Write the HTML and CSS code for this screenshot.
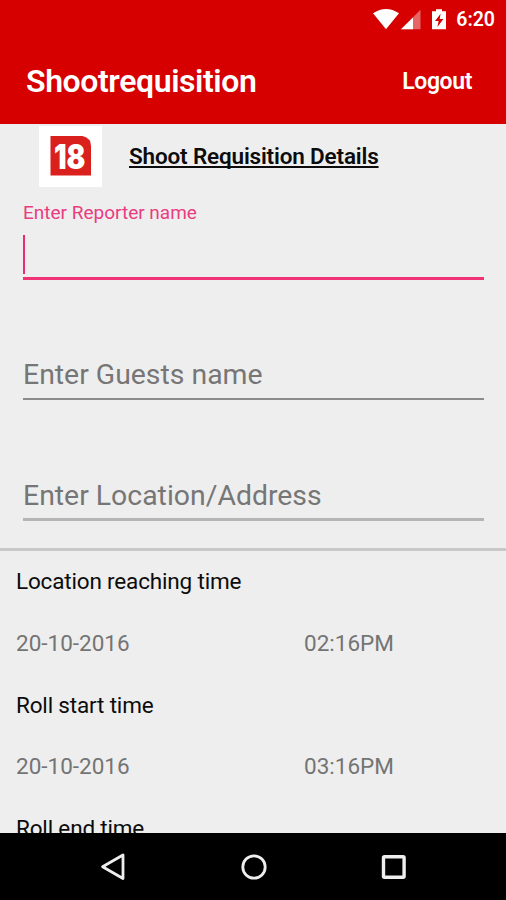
FILE: index.html
```html
<!DOCTYPE html>
<html lang="en">
<head>
<meta charset="utf-8">
<title>Shootrequisition</title>
<link rel="stylesheet" href="styles.css">
</head>
<body>
<div class="screen">
  <header class="top">
    <div class="status">
      <svg class="status-icons" width="80" height="24" viewBox="0 0 80 24">
        <path d="M0 4.3Q13 -4.3 26 4.3L13 20.3Z" fill="#fff"/>
        <path d="M47.5 0.8V20.3H28Z" fill="#fff" opacity=".4"/>
        <path d="M40 8.4V20.3H28Z" fill="#fff"/>
        <path d="M63 .2h6v2h4v18H59v-18h4Z" fill="#fff"/>
        <path d="M67.6 4.8L62 12h3.6l-1.2 6 6-8h-3.7Z" fill="#d60000"/>
      </svg>
      <span class="clock">6:20</span>
    </div>
    <div class="appbar">
      <h1 class="title">Shootrequisition</h1>
      <span class="logout">Logout</span>
    </div>
  </header>
  <main class="content">
    <div class="heading">
      <svg class="logo" width="63" height="61" viewBox="0 0 63 61">
        <path d="M0 0H63V61H0Z" fill="#fff"/>
        <path d="M11.5 10H43.5Q52 12 52 20V49.5H11.5Z" fill="#d9201c"/>
        <text class="logo-text" x="15" y="42.8" textLength="31.5" lengthAdjust="spacingAndGlyphs">18</text>
      </svg>
      <h2 class="subtitle">Shoot Requisition Details</h2>
    </div>
    <div class="field field-active">
      <span class="float-label">Enter Reporter name</span>
      <div class="input"><span class="caret"></span></div>
    </div>
    <div class="field field-guests">Enter Guests name</div>
    <div class="field field-location">Enter Location/Address</div>
    <div class="divider"></div>
    <section class="times">
      <div class="row label">Location reaching time</div>
      <div class="row value"><span>20-10-2016</span><span>02:16PM</span></div>
      <div class="row label">Roll start time</div>
      <div class="row value"><span>20-10-2016</span><span>03:16PM</span></div>
      <div class="row label">Roll end time</div>
    </section>
  </main>
  <nav class="navbar">
    <svg width="26" height="28" viewBox="0 0 26 28"><path d="M23 2V25.5L2.6 13.7Z" fill="none" stroke="#eee" stroke-width="2.8" stroke-linejoin="round"/></svg>
    <svg width="26" height="28" viewBox="0 0 26 28"><circle cx="13" cy="14" r="11.2" fill="none" stroke="#eee" stroke-width="2.8"/></svg>
    <svg width="26" height="28" viewBox="0 0 26 28"><rect x="2.5" y="3.7" width="20.6" height="20.6" rx="1" fill="none" stroke="#eee" stroke-width="3.4"/></svg>
  </nav>
</div>
</body>
</html>
```
FILE: styles.css
```css
* { box-sizing: border-box; }
body { margin: 0; font-family: Roboto, "Liberation Sans", sans-serif; color: #0c0c0c; }
h1, h2 { margin: 0; font-weight: 500; white-space: nowrap; }
.screen { width: 506px; height: 900px; display: flex; flex-direction: column; overflow: hidden; background: #eee; }
.top { height: 124px; flex: none; background: #d60000; color: #fff; }
.status { height: 38px; display: flex; align-items: center; justify-content: flex-end; padding-right: 11px; }
.status-icons { margin: 4px 3px 0 0; }
.clock { margin-top: 2px; font-size: 19.5px; font-weight: 600; line-height: 38px; }
.appbar { height: 86px; display: flex; align-items: center; justify-content: space-between; padding: 0 34px 0 26px; }
.title { font-size: 32px; font-weight: 600; letter-spacing: -0.4px; line-height: 86px; }
.logout { font-size: 23px; font-weight: 600; letter-spacing: -0.4px; margin-top: 1px; }
.content { flex: 1; min-height: 0; overflow: hidden; }
.heading { height: 63px; display: flex; align-items: center; padding: 1px 0 0 39px; }
.logo { flex: none; }
.logo-text { font-family: Inter, sans-serif; font-weight: 900; font-size: 34px; fill: #fff; }
.subtitle { margin: 0 0 0 27px; font-size: 22.5px; font-weight: 600; letter-spacing: -0.17px; line-height: 30px; text-decoration: underline; text-decoration-thickness: 1.5px; text-underline-offset: 2px; text-decoration-skip-ink: none; }
.field { margin: 0 22px 0 23px; font-size: 28.4px; color: #767676; white-space: nowrap; }
.field-active { height: 93px; padding-top: 13px; border-bottom: 3px solid #f03375; }
.float-label { display: block; font-size: 19px; line-height: 26px; color: #ea3c80; }
.input { padding-top: 9px; }
.caret { display: block; width: 2px; height: 39px; background: #e62c72; }
.field-guests { height: 120px; padding-top: 75px; line-height: 40px; border-bottom: 2px solid #8b8b8b; }
.field-location { height: 121px; padding-top: 76px; line-height: 40px; border-bottom: 3px solid #b5b5b5; }
.divider { height: 3px; margin-top: 27px; background: #c8c8c8; }
.times { padding: 0.4px 16px 0; font-size: 22.5px; }
.row { height: 61.7px; line-height: 61.7px; white-space: nowrap; }
.label { letter-spacing: -0.17px; }
.value { display: grid; grid-template-columns: 288px 1fr; color: #747474; }
.navbar { height: 67px; flex: none; display: flex; align-items: center; justify-content: center; gap: 114.5px; padding-left: 1.5px; background: #000; }
```
